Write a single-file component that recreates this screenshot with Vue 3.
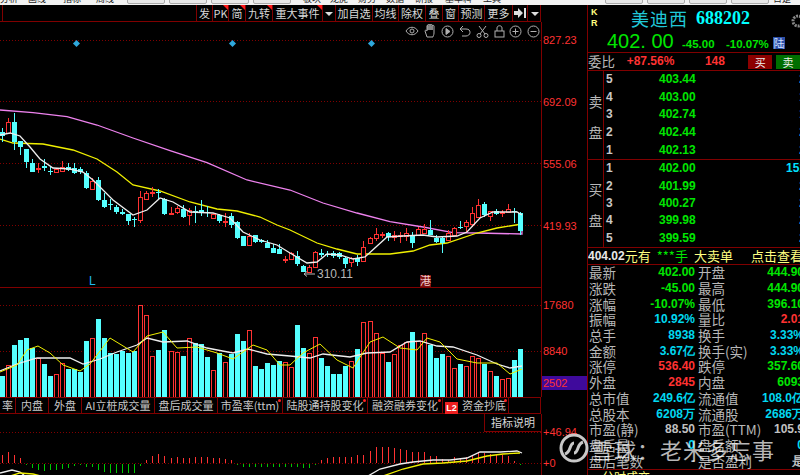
<script setup>
const topItems = [
  { text: '分析', w: 28 }, { text: '画线', w: 35 }, { text: '指标', w: 33 }, { text: '周线', w: 31 },
  { box: true, w: 38 }, { box: true, w: 38 }, { box: true, w: 38 }, { box: true, w: 38 },
  { text: '', w: 8 },
  { text: '板块', w: 27 }, { text: '龙虎', w: 28 }, { text: '财务', w: 28 }, { text: '数据', w: 29 },
  { text: '研报', w: 30 }, { text: '基本料', w: 38 }, { text: '工具', w: 122 },
  { box: true, w: 38 }, { box: true, w: 38 }, { box: true, w: 38 }, { box: true, w: 38 },
  { text: '日是', w: 30 }
]

const tools = [
  { text: '', w: 3 },
  { text: '', w: 194 },
  { text: '发', w: 16 },
  { text: 'PK', w: 16, flag: true },
  { text: '简', w: 17, flag: true },
  { text: '九转', w: 27, flag: true },
  { text: '重大事件', w: 50, flag: true },
  { arrow: true, w: 13 },
  { text: '加自选', w: 37 },
  { text: '均线', w: 26 },
  { text: '除权', w: 27 },
  { text: '叠', w: 17 },
  { text: '窗', w: 16 },
  { text: '预测', w: 26 },
  { text: '更多', w: 28 },
  { jump: true, w: 15 },
  { arrow: true, w: 13 }
]

// 坐标取自截图，[实体上, 实体下, 影线上, 影线下, 颜色]
const c1 = [
  [95,108,85,125,'c'],[67,98,55,100,'r'],[67,127,40,150,'c'],[124,140,124,165,'c'],[146,185,146,203,'c'],
  [188,216,178,216,'c'],[203,205,188,220,'r'],[197,203,178,213,'c'],[212,215,200,225,'c'],[208,217,203,218,'r'],
  [202,212,182,214,'r'],[201,209,188,212,'c'],[205,218,188,222,'c'],[208,216,200,222,'c'],[220,263,212,266,'c'],
  [243,266,234,268,'r'],[240,300,232,303,'c'],[300,322,280,324,'c'],[313,316,298,330,'c'],[321,336,315,342,'c'],
  [335,343,328,345,'c'],[342,362,342,375,'c'],[358,361,352,380,'c'],[290,360,272,368,'r'],[278,297,272,300,'r'],
  [276,278,262,290,'r'],[276,280,268,298,'c'],[298,341,295,345,'c'],[338,340,320,341,'r'],[323,335,318,342,'r'],
  [327,350,316,355,'c'],[331,344,325,375,'r'],[334,336,318,370,'c'],[331,335,300,348,'c'],[337,340,318,350,'c'],
  [343,354,338,358,'r'],[345,362,343,368,'c'],[362,365,340,380,'r'],[349,375,338,384,'c'],[366,414,364,416,'c'],
  [408,438,408,438,'c'],[408,435,398,437,'r'],[406,427,404,428,'c'],[420,427,416,430,'c'],[428,443,420,445,'c'],
  [443,458,432,459,'c'],[447,461,432,462,'c'],[478,480,468,488,'r']
]
const c2 = [
  [250,268,245,270,'r'],[258,283,243,288,'c'],[288,306,285,306,'c'],[292,305,285,308,'r'],[246,290,244,295,'r'],
  [248,256,238,260,'c'],[251,255,243,262,'c'],[249,258,243,265,'c'],[250,262,245,268,'c'],[263,283,260,293,'c'],
  [265,276,262,290,'r'],[263,275,255,287,'c'],[230,273,212,275,'r'],[203,220,200,222,'r'],[193,205,175,213,'r'],
  [191,193,186,205,'r'],[190,200,186,212,'c'],[196,201,182,212,'r'],[196,199,185,218,'r'],[190,198,175,212,'r'],
  [196,218,185,233,'c'],[178,194,170,196,'r'],[178,188,162,190,'r'],[180,194,150,196,'c'],[204,215,196,218,'c'],
  [204,220,198,248,'c'],[190,210,180,212,'r'],[175,196,172,198,'r'],[170,174,152,178,'c'],[156,168,150,186,'r'],
  [130,162,110,170,'r'],[105,140,88,142,'r'],[103,135,95,140,'c'],[124,139,122,152,'r'],[123,132,118,136,'c'],
  [125,127,120,142,'r'],[118,127,102,128,'r'],[124,127,114,160,'c'],[128,183,125,195,'c']
]
const xOf = (i) => Math.round(1.67 + 6.03 * i)
const candles = [
  ...c1.map((c) => ({ t: 100 + c[0] / 3, b: 100 + c[1] / 3, h: 100 + c[2] / 3, l: 100 + c[3] / 3, k: c[4] })),
  ...c2.map((c) => ({ t: 170 + c[0] / 3, b: 170 + c[1] / 3, h: 170 + c[2] / 3, l: 170 + c[3] / 3, k: c[4] }))
].map((c, i) => ({
  x: xOf(i),
  k: c.k,
  t: Math.round(c.t),
  b: Math.max(Math.round(c.b), Math.round(c.t) + 1),
  h: Math.round(c.h),
  l: Math.round(c.l)
}))

const maPurple = '0,110 33,112.7 67,116.7 97,125 133,138 170,150.7 207,162.7 247,180 290,190 323,203 357,213 390,221.7 423,227 453,232.7 477,233 522,234 522,226'
const maYellow = '0,139 13,143 43,144 73,150 97,159 117,172 133,185 160,191 190,202 217,209 237,211 260,217 277,225 290,230 317,243 337,249 357,254 390,254 413,251 430,245 447,243 477,233 497,228 522,224'
const maWhite = '0,135 10,133 20,136 30,147 40,159 53,168 70,169 83,172 93,180 113,200 133,215 147,210 160,198 173,202 190,212 213,213 230,218 243,232 260,240 277,245 290,253 307,263 317,262 327,254 340,255 353,259 365,257 387,237 403,236 423,235 437,237 457,236 467,232 480,218 493,212 517,212 522,215'

const volTops = [
  272,241,181,165,160,190,220,236,272,268,234,251,252,260,168,159,103,160,204,206,197,203,198,61,91,213,195,135,197,202,212,160,174,178,217,255,204,231,207,147,168,135,243,251,233,240,228,231,
  246,121,189,203,157,218,243,267,267,243,229,192,112,109,145,205,231,207,180,172,142,167,145,180,219,207,214,250,238,244,214,220,237,257,272,283,278,225,192
]
const bars = volTops.map((v, i) => ({
  x: xOf(i),
  top: Math.round(285 + v / 3),
  k: candles[i].k
}))

const zoomLine = (pts) => pts.map((p) => p.join(',')).join(' ')
const volWhite = zoomLine([
  [0,371],[17,364],[37,358],[70,358],[83,364],[100,359],[117,352],[137,345],[147,338],[163,342],[187,341],[207,348],[233,353],[248,349],[267,354],[290,356],
  [310,358],[323,354],[350,357],[367,353],[390,352],[407,342],[420,341],[437,346],[453,347],[477,355],[497,364],[510,368],[522,366]
])
const volYellow = zoomLine([
  [0,372],[17,365],[27,350],[38,346],[50,353],[63,365],[80,371],[90,364],[110,338],[133,352],[147,336],[163,332],[177,348],[197,347],[217,353],[233,359],[253,345],[267,350],[280,365],
  [290,365],[303,353],[320,344],[337,360],[353,368],[370,342],[383,337],[400,348],[417,350],[427,338],[440,342],[457,359],[477,363],[497,363],[510,374],[522,369]
])

const macd = [
  8.3,11,8.3,5,-1,-4,-6,-7,-6,-6,-4.5,-3.5,-2,-1,-3,-3,-6,-8,-8.5,-8.5,-9,-9,-8.5,-2,
  3.5,6.7,9.3,6.7,5.3,5.6,5,5,5.6,5.6,5.6,5.3,5,4.3,3.3,-1,-3,-2.5,-2.5,-2.5,-2.5,-2.5,-3,-3,-3,-3,-3.5,-3.5,-1,
  3.3,5,6.3,6.3,5.6,6.3,7.6,8.3,12.3,15.6,16,16.3,15,14.3,13.3,11,11,10.7,6.7,6.7,4,3,5.7,5,6,6.7,10,10,9,8.3,7.6,6.7,1.7,-1
].map((v, i) => ({ x: xOf(i), v }))

const tabs = [
  { text: '率', w: 16 }, { text: '内盘', w: 33 }, { text: '外盘', w: 33 }, { text: 'AI立桩成交量', w: 73 },
  { text: '盘后成交量', w: 63 }, { text: '市盈率(ttm)', w: 65, dot: true }, { text: '陆股通持股变化', w: 85, dot: true },
  { text: '融资融券变化', w: 75, dot: true }, { text: '资金抄底', w: 66, dot: true, l2: true }
]

const sells = [
  { n: 5, p: '403.44', q: '2' }, { n: 4, p: '403.00', q: '1' }, { n: 3, p: '402.74', q: '1' }, { n: 2, p: '402.44', q: '2' }, { n: 1, p: '402.13', q: '2' }
]
const buys = [
  { n: 1, p: '402.00', q: '151' }, { n: 2, p: '401.99', q: '2' }, { n: 3, p: '400.27', q: '2' }, { n: 4, p: '399.98', q: '2' }, { n: 5, p: '399.59', q: '2' }
]

const stats = [
  ['最新', '402.00', 'g', '开盘', '444.90', 'g'],
  ['涨跌', '-45.00', 'g', '最高', '444.90', 'g'],
  ['涨幅', '-10.07%', 'g', '最低', '396.10', 'g'],
  ['振幅', '10.92%', 'b', '量比', '2.01', 'r'],
  ['总手', '8938', 'b', '换手', '3.33%', 'b'],
  ['金额', '3.67亿', 'b', '换手(实)', '3.33%', 'b'],
  ['涨停', '536.40', 'r', '跌停', '357.60', 'g'],
  ['外盘', '2845', 'r', '内盘', '6093', 'g'],
  ['总市值', '249.6亿', 'b', '流通值', '108.0亿', 'b'],
  ['总股本', '6208万', 'b', '流通股', '2686万', 'b'],
  ['市盈(静)', '88.50', 'w', '市盈(TTM)', '105.9', 'w'],
  ['盘后量', '0', 'b', '盘后额', '0', 'b'],
  ['盘后笔数', '-', 'w', '是否盈利', '是', 'w']
]
</script>

<template>
  <div class="page">
    <div class="top-bar">
      <div
        v-for="(item, i) in topItems"
        :key="i"
        class="top-item"
        :class="{ box: item.box }"
        :style="{ width: item.w + 'px' }"
      >{{ item.text }}</div>
    </div>

    <div class="body">
      <div class="left">
        <div class="toolbar">
          <div
            v-for="(t, i) in tools"
            :key="i"
            class="tool"
            :class="{ flag: t.flag }"
            :style="{ width: t.w + 'px' }"
          >
            <span v-if="t.arrow" class="caret"></span>
            <svg v-else-if="t.jump" width="12" height="10" viewBox="0 0 12 10">
              <path d="M0 3h4V0l5 5-5 5V7H0z" fill="#ddd" />
              <rect x="10" y="0" width="2" height="10" fill="#ddd" />
            </svg>
            <template v-else>{{ t.text }}</template>
          </div>
        </div>

        <div class="pane kline">
          <svg class="chart" width="587" height="265" viewBox="0 22 587 265">
            <line v-for="y in [40.5, 101.5, 163.5, 225.5]" :key="y" x1="0" x2="541" :y1="y" :y2="y" class="dots" />
            <polyline :points="maPurple" class="ma purple" />
            <polyline :points="maYellow" class="ma yellow" />
            <g v-for="c in candles" :key="c.x" shape-rendering="crispEdges">
              <template v-if="c.k === 'c'">
                <line :x1="c.x + 0.5" :x2="c.x + 0.5" :y1="c.h" :y2="c.l" class="w-c" />
                <rect :x="c.x - 2" :y="c.t" width="5" :height="c.b - c.t" class="body-c" />
              </template>
              <template v-else>
                <line :x1="c.x + 0.5" :x2="c.x + 0.5" :y1="c.h" :y2="c.t" class="w-r" />
                <line :x1="c.x + 0.5" :x2="c.x + 0.5" :y1="c.b" :y2="c.l" class="w-r" />
                <rect :x="c.x - 1.5" :y="c.t + 0.5" width="4" :height="c.b - c.t" class="body-r" />
              </template>
            </g>
            <polyline :points="maWhite" class="ma white" />

            <rect x="74" y="41" width="5" height="5" transform="rotate(45 76.5 43.5)" class="mark" />
            <rect x="230" y="41" width="5" height="5" transform="rotate(45 232.5 43.5)" class="mark" />
            <rect x="369" y="41" width="5" height="5" transform="rotate(45 371.5 43.5)" class="mark" />

            <path d="M315 274h-11m3-2.500l-3 2.500 3 2.500" class="arrow" />
            <text x="317" y="278" class="low">310.11</text>
            <text x="89" y="285" class="l-mark">L</text>
            <rect x="420" y="275" width="11" height="12" fill="#7d0f0f" />
            <text x="420" y="285" class="gang">港</text>

            <text x="543" y="44" class="axis">827.23</text>
            <text x="543" y="105.500" class="axis">692.09</text>
            <text x="543" y="167.500" class="axis">555.06</text>
            <text x="543" y="229.500" class="axis">419.93</text>
          </svg>
          <div class="icons">
            <svg width="14" height="12" viewBox="0 0 14 12"><path d="M1 6c3-5 9-5 12 0-3 5-9 5-12 0z" /><circle cx="7" cy="6" r="2" /></svg>
            <svg width="13" height="14" viewBox="0 0 13 14"><path d="M3 13L1 7c0-1 1-1 2 0V2c0-1 1-1 1 0v4V1c0-1 2-1 2 0v5V1c0-1 2-1 2 0v5V2c0-1 2-1 2 0v7c0 2-1 3-1 4z" /></svg>
            <svg width="13" height="13" viewBox="0 0 13 13"><circle cx="6.500" cy="6.500" r="5.500" /><path d="M5 3.500l4 3-4 3z" class="solid" /></svg>
            <svg width="12" height="12" viewBox="0 0 12 12"><path d="M4 1L1 4l3 3M1 4h6c3 0 4 1.500 4 3.500S9 11 7 11H3" /></svg>
            <svg width="13" height="13" viewBox="0 0 13 13"><path d="M3 1l6 8M10 1L4 9" /><circle cx="3" cy="10.500" r="2" /><circle cx="10" cy="10.500" r="2" /></svg>
            <svg width="11" height="13" viewBox="0 0 11 13"><rect x="1" y="6" width="9" height="6" /><path d="M3 6V3c0-3 5-3 5 0v3" /></svg>
            <svg width="13" height="13" viewBox="0 0 13 13"><circle cx="6.500" cy="6.500" r="5.500" /><path d="M3.500 6.500h6M6.500 3.500v6" /></svg>
            <svg width="13" height="13" viewBox="0 0 13 13"><circle cx="6.500" cy="6.500" r="5.500" /><path d="M3.500 6.500h6" /></svg>
          </div>
        </div>

        <div class="pane volume">
          <svg class="chart" width="587" height="110" viewBox="0 287 587 110">
            <line v-for="y in [305.500, 351.500]" :key="y" x1="0" x2="541" :y1="y" :y2="y" class="dots" />
            <g shape-rendering="crispEdges">
              <template v-for="b in bars" :key="b.x">
                <rect v-if="b.k === 'c'" :x="b.x - 2" :y="b.top" width="5" :height="397 - b.top" class="body-c" />
                <rect v-else :x="b.x - 1.500" :y="b.top + 0.5" width="4" :height="397 - b.top" class="body-r" />
              </template>
            </g>
            <polyline :points="volWhite" class="ma white" />
            <polyline :points="volYellow" class="ma yellow thin" />
            <rect x="542" y="376" width="46" height="14" fill="#3f0a9c" />
            <text x="543" y="309" class="axis">17680</text>
            <text x="543" y="355" class="axis">8840</text>
            <text x="543" y="387" class="axis">2502</text>
          </svg>
        </div>

        <div class="tabs-row">
          <div class="tabs">
            <div v-for="t in tabs" :key="t.text" class="tab" :style="{ width: t.w + 'px' }">
              <span v-if="t.l2" class="l2">L2</span>{{ t.text }}<i v-if="t.dot" class="dot"></i>
            </div>
          </div>
        </div>

        <div class="pane macd">
          <svg class="chart" width="587" height="61" viewBox="0 414 587 61">
            <line x1="0" x2="541" y1="432.500" y2="432.500" class="dots" />
            <line x1="0" x2="541" y1="463.500" y2="463.500" class="dots" />
            <g shape-rendering="crispEdges">
              <rect
                v-for="m in macd"
                :key="m.x"
                :x="m.x"
                :y="m.v > 0 ? 463 - m.v : 464"
                width="1"
                :height="Math.abs(m.v)"
                :fill="m.v > 0 ? '#ff3232' : '#00c800'"
              />
            </g>
            <polyline points="0,473 12,470 20,472 25,476" class="ma white" />
            <polyline points="10,476 20,473 33,474 41,476" class="ma yellow" />
            <polyline points="368,476 380,469 400,464 413,462 433,460 450,460 467,458 480,452 500,452 517,451 522,453" class="ma white" />
            <polyline points="383,476 403,469 423,464 443,463 467,461 487,456 503,454 520,453" class="ma yellow" />
            <text x="543" y="436" class="axis">+46.94</text>
            <text x="543" y="467" class="axis">+0</text>
          </svg>
          <div class="explain">指标说明</div>
        </div>

        <svg class="logo" width="30" height="30" viewBox="0 0 30 30">
          <circle cx="15" cy="15" r="13" />
          <path d="M6 21c3-1 4-3 5-6 1-3 2-5 4-5M24 9c-3 1-4 3-5 6-1 3-2 5-4 5" />
        </svg>
      </div>

      <div class="panel">
        <div class="head">
          <div class="kr"><span>K</span><span>R</span></div>
          <div class="title"><span class="name">美迪西</span><span class="code">688202</span></div>
          <svg class="gear" width="12" height="14" viewBox="0 0 12 14"><circle cx="10" cy="7" r="5" fill="none" stroke="#888" stroke-width="3" stroke-dasharray="2 1" /></svg>
        </div>
        <div class="quote">
          <span class="big">402. 00</span>
          <span class="chg">-45.00</span>
          <span class="pct">-10.07%</span>
          <span class="lu">陆</span>
        </div>
        <div class="ratio">
          <span class="ratio-label">委比</span>
          <span class="r ratio-val">+87.56%</span>
          <span class="r ratio-num">148</span>
          <span class="btn buy">买</span>
          <span class="btn sell">卖</span>
        </div>

        <div class="book first">
          <div class="side"><span>卖</span><span>盘</span></div>
          <div class="rows">
            <div v-for="r in sells" :key="r.n" class="book-row">
              <span class="n">{{ r.n }}</span><span class="p">{{ r.p }}</span><span class="q">{{ r.q }}</span>
            </div>
          </div>
        </div>
        <div class="book">
          <div class="side"><span>买</span><span>盘</span></div>
          <div class="rows">
            <div v-for="r in buys" :key="r.n" class="book-row">
              <span class="n">{{ r.n }}</span><span class="p">{{ r.p }}</span><span class="q">{{ r.q }}</span>
            </div>
          </div>
        </div>

        <div class="notice">
          <b>404.02</b><span class="ye">元有</span><span class="gr">***手</span><span class="ye">大卖单</span><span class="ye more">点击查看</span>
        </div>

        <div class="stats">
          <div v-for="s in stats" :key="s[0]" class="stat">
            <span class="lb">{{ s[0] }}</span>
            <span class="val" :class="s[2]">{{ s[1] }}</span>
            <span class="lb lb2">{{ s[3] }}</span>
            <span class="val val2" :class="s[5]">{{ s[4] }}</span>
          </div>
        </div>
        <div class="foot"><span>分时成交</span></div>
      </div>
    </div>

    <div class="watermark">雪球：老米多忘事</div>
  </div>
</template>

<style scoped>
.page {
  position: relative;
  width: 800px;
  height: 475px;
  overflow: hidden;
  background: #000;
  font-family: "Noto Sans CJK SC", "Liberation Sans", sans-serif;
  color: #c0c0c0;
}

.top-bar {
  display: flex;
  align-items: flex-start;
  height: 5px;
  overflow: hidden;
  background: #f2f2f2;
}

.top-item {
  flex: none;
  font-size: 9px;
  line-height: 10px;
  margin-top: -6px;
  color: #222;
  white-space: nowrap;
}

.top-item.box {
  height: 9px;
  margin: -5px 4px 0 0;
  border: 1px solid #aaa;
  border-radius: 2px;
  background: #e8e8e8;
  box-sizing: border-box;
}

.body {
  display: flex;
  height: 470px;
}

.left {
  width: 587px;
  flex: none;
}

.toolbar {
  display: flex;
  width: 541px;
  height: 17px;
  box-sizing: border-box;
  border-bottom: 1px solid #800000;
  border-right: 1px solid #800000;
}

.tool {
  position: relative;
  flex: none;
  box-sizing: border-box;
  border-right: 1px solid #800000;
  font-size: 11px;
  line-height: 16px;
  text-align: center;
  color: #d8d8d8;
  white-space: nowrap;
}

.tool:last-child {
  border-right: 0;
}

.tool.flag::after {
  content: "";
  position: absolute;
  top: 0;
  right: 0;
  border-top: 5px solid #ff1a1a;
  border-left: 5px solid transparent;
}

.caret {
  display: inline-block;
  margin-bottom: 2px;
  border-top: 4px solid #ddd;
  border-left: 4px solid transparent;
  border-right: 4px solid transparent;
}

.pane {
  position: relative;
}

.chart {
  display: block;
}

.kline {
  height: 265px;
}

.volume {
  height: 110px;
}

.macd {
  height: 61px;
}

.kline .chart,
.volume .chart,
.macd .chart {
  background: linear-gradient(#800000, #800000) 541px 0 / 1px 100% no-repeat;
}

.volume::before {
  content: "";
  position: absolute;
  top: 0;
  left: 0;
  width: 541px;
  height: 1px;
  background: #800000;
}

.dots {
  stroke: #800000;
  stroke-width: 1;
  stroke-dasharray: 1 2;
}

.ma {
  fill: none;
  stroke-width: 1.300;
}

.purple {
  stroke: #ee82ee;
}

.yellow {
  stroke: #f0f000;
}

.white {
  stroke: #eeeeee;
}

.thin {
  stroke-width: 1;
}

.body-c {
  fill: #55ffff;
}

.w-c {
  stroke: #55ffff;
  stroke-width: 1;
}

.w-r {
  stroke: #ff3232;
  stroke-width: 1;
}

.body-r {
  fill: #000;
  stroke: #ff3232;
  stroke-width: 1;
}

.mark {
  fill: #2fa8dc;
}

.arrow {
  fill: none;
  stroke: #b8b8b8;
}

.low {
  font: 12px "Liberation Sans", sans-serif;
  fill: #b8b8b8;
}

.l-mark {
  font: 12px "Liberation Sans", sans-serif;
  fill: #22b8ee;
}

.gang {
  font: 11px "Noto Sans CJK SC", sans-serif;
  fill: #f0d0d0;
}

.axis {
  font: 11px "Liberation Sans", sans-serif;
  fill: #ff3232;
}

.icons {
  position: absolute;
  top: 2px;
  left: 405px;
  display: flex;
  align-items: center;
  gap: 4px;
  width: 135px;
  height: 14px;
  justify-content: space-between;
}

.icons svg {
  fill: none;
  stroke: #b0b0b0;
  stroke-width: 1;
}

.icons .solid {
  fill: #b0b0b0;
}

.tabs-row {
  width: 541px;
  height: 17px;
  box-sizing: border-box;
  border-top: 1px solid #800000;
  border-bottom: 1px solid #800000;
  border-right: 1px solid #800000;
}

.tabs {
  display: flex;
}

.tab {
  position: relative;
  flex: none;
  box-sizing: border-box;
  height: 15px;
  border-right: 1px solid #800000;
  font-size: 11px;
  line-height: 15px;
  text-align: center;
  color: #c8c8c8;
  white-space: nowrap;
}

.l2 {
  display: inline-block;
  width: 13px;
  height: 12px;
  margin-right: 4px;
  background: #ee2020;
  color: #fff;
  font: bold 9px/12px "Liberation Sans", sans-serif;
  text-align: center;
  vertical-align: -1px;
}

.dot {
  position: absolute;
  top: 1px;
  right: 1px;
  width: 3px;
  height: 3px;
  border-radius: 50%;
  background: #ff2020;
}

.explain {
  position: absolute;
  top: 0;
  left: 484px;
  width: 57px;
  height: 18px;
  box-sizing: border-box;
  border-left: 1px solid #800000;
  border-bottom: 1px solid #800000;
  font-size: 11px;
  line-height: 17px;
  text-align: center;
  color: #d8d8d8;
}

.logo {
  position: absolute;
  top: 433px;
  left: 559px;
}

.logo circle,
.logo path {
  fill: none;
  stroke: #c8c8c8;
  stroke-width: 3;
}

.panel {
  width: 213px;
  flex: none;
  box-sizing: border-box;
  border-left: 1px solid #800000;
  overflow: hidden;
}

.head {
  position: relative;
  height: 26px;
}

.kr {
  position: absolute;
  top: 2px;
  left: 3px;
  display: flex;
  flex-direction: column;
  font: bold 9px/11px "Liberation Sans", sans-serif;
  color: #ffff80;
}

.title {
  display: flex;
  align-items: center;
  height: 26px;
  padding-left: 43px;
  color: #00ffff;
}

.name {
  font: 18px/26px "Noto Sans CJK SC", serif;
  letter-spacing: 1px;
  color: #20c8d8;
  margin-right: 8px;
}

.code {
  font: bold 18px/26px "Liberation Serif", serif;
}

.gear {
  position: absolute;
  top: 9px;
  right: 0;
}

.quote {
  display: flex;
  align-items: baseline;
  height: 21px;
  box-sizing: border-box;
  padding-left: 19px;
  color: #00e600;
  line-height: 20px;
}

.big {
  width: 75px;
  font: 20px/20px "Liberation Sans", sans-serif;
  white-space: pre;
}

.chg {
  width: 44px;
  font: bold 11.500px/20px "Liberation Sans", sans-serif;
}

.pct {
  width: 47px;
  font: bold 11.500px/20px "Liberation Sans", sans-serif;
}

.lu {
  width: 12px;
  height: 12px;
  background: #2c4fa8;
  color: #d0e0ff;
  font-size: 11px;
  line-height: 12px;
  text-align: center;
}

.ratio {
  display: flex;
  align-items: center;
  height: 19px;
  box-sizing: border-box;
  border-top: 1px solid #800000;
  border-bottom: 1px solid #800000;
}

.ratio-label {
  width: 39px;
  font-size: 13.500px;
  line-height: 17px;
  color: #b8b8b8;
}

.ratio-val {
  width: 79px;
  font: bold 12px/17px "Liberation Sans", sans-serif;
}

.ratio-num {
  width: 44px;
  font: bold 12px/17px "Liberation Sans", sans-serif;
}

.btn {
  width: 24px;
  height: 14px;
  font-size: 11px;
  line-height: 14px;
  text-align: center;
  color: #eee;
}

.buy {
  background: #8c0000;
  margin-right: 4px;
}

.sell {
  background: #006e00;
}

.book {
  display: flex;
  height: 88px;
  box-sizing: border-box;
  border-bottom: 1px solid #800000;
}

.book.first {
  height: 89px;
}

.side {
  display: flex;
  flex-direction: column;
  justify-content: space-around;
  align-items: center;
  width: 16px;
  flex: none;
  padding: 14px 0 12px;
  box-sizing: border-box;
  border-right: 1px solid #800000;
  font-size: 13.500px;
  color: #b8b8b8;
}

.rows {
  display: flex;
  flex-direction: column;
  justify-content: space-around;
  flex: 1;
  min-width: 0;
}

.book-row {
  display: flex;
  align-items: center;
  height: 17px;
  font: bold 12px/17px "Liberation Sans", sans-serif;
}

.n {
  flex: none;
  width: 55px;
  padding-left: 2px;
  box-sizing: border-box;
  color: #c8c8c8;
}

.p {
  flex: none;
  width: 37px;
  color: #00e600;
}

.q {
  width: 110px;
  flex: none;
  text-align: right;
  color: #00e0ff;
}

.notice {
  display: flex;
  height: 17px;
  box-sizing: border-box;
  border-bottom: 1px solid #800000;
  font-size: 13px;
  line-height: 16px;
  white-space: nowrap;
  color: #ffff80;
}

.notice b {
  font: bold 12px/16px "Liberation Sans", sans-serif;
  color: #e8e8e8;
}

.ye {
  color: #ffff80;
}

.gr {
  margin: 0 6px;
  color: #00e600;
}

.more {
  margin-left: 18px;
}

.stats {
  width: 222px;
}

.stat {
  display: flex;
  align-items: center;
  height: 15.700px;
  white-space: nowrap;
}

.lb {
  flex: none;
  width: 50px;
  padding-left: 1px;
  box-sizing: border-box;
  font-size: 13.500px;
  line-height: 15px;
  color: #b8b8b8;
}

.val {
  flex: none;
  width: 57px;
  text-align: right;
  font: bold 12px/15px "Liberation Sans", sans-serif;
}

.lb2 {
  width: 64px;
  padding-left: 3px;
}

.val2 {
  width: 45px;
}

.g {
  color: #00e600;
}

.r {
  color: #ff3232;
}

.b {
  color: #00d8f0;
}

.w {
  color: #c0c0c0;
}

.foot {
  border-top: 1px solid #800000;
  padding-left: 14px;
  font-size: 12px;
  line-height: 14px;
  color: #ffff80;
}

.watermark {
  position: absolute;
  top: 436px;
  left: 591px;
  font-size: 22px;
  line-height: 26px;
  letter-spacing: 1px;
  color: rgba(255, 255, 255, 0.72);
  white-space: nowrap;
}
</style>

<style>
html,
body {
  margin: 0;
  overflow: hidden;
  background: #000;
}
</style>
